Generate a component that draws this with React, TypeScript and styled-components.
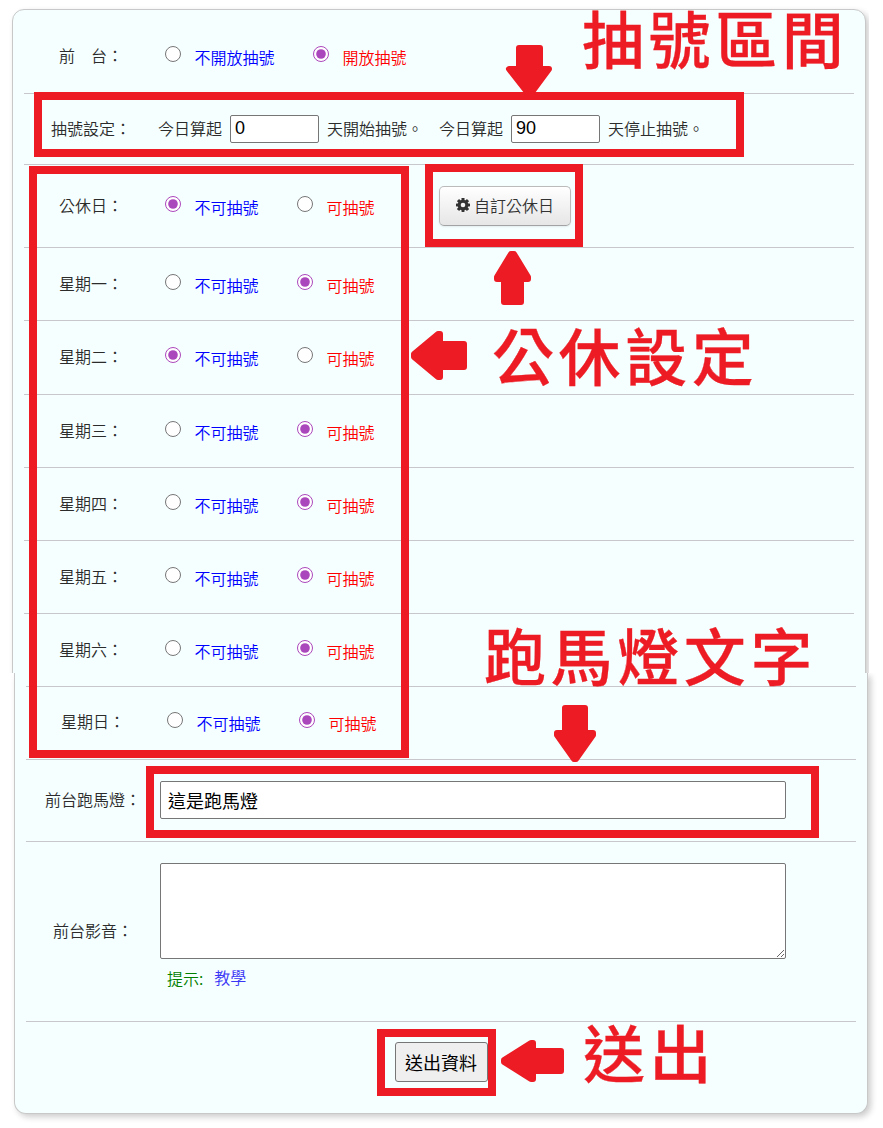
import React from 'react';
import styled, { createGlobalStyle } from 'styled-components';

const RED = '#ed1c24';
const CJK = '"Noto Sans CJK TC", sans-serif';

const GlobalStyle = createGlobalStyle`
  * { box-sizing: border-box; }
  body { margin: 0; background: #fff; }
`;

const Page = styled.div`
  position: relative;
  width: 883px;
  height: 1128px;
  overflow: hidden;
  font: 350 16px/20px ${CJK};
  color: #2b2b2b;
`;

const UpperHalf = styled.div`
  width: 869px;
  height: 673px;
  padding: 9px 0 0 12px;
  overflow: hidden;
`;

const LowerHalf = styled.div`
  height: 455px;
  padding-left: 14px;
  overflow: hidden;
`;

const Panel = styled.section<{ $end: 'top' | 'bottom' }>`
  width: 854px;
  height: ${p => (p.$end === 'top' ? 700 : 441)}px;
  padding: 0 11px;
  background: #f5ffff;
  border: 1px solid #c8c8c8;
  ${p => (p.$end === 'top' ? 'border-radius: 12px 12px 0 0;' : 'border-top: 0; border-radius: 0 0 12px 12px;')}
  box-shadow: 3px 3px 6px rgba(0, 0, 0, 0.2);
`;

const Row = styled.div<{ $h: number; $drop?: number; $lift?: number }>`
  display: flex;
  align-items: center;
  height: ${p => p.$h}px;
  padding-top: ${p => p.$drop ?? 0}px;
  padding-bottom: ${p => p.$lift ?? 0}px;
  border-bottom: 1px solid #c8c8cc;
`;

const RowLabel = styled.div`
  flex: none;
  width: 134px;
  padding-bottom: 2px;
  text-align: center;
  white-space: pre;
`;

const RadioGroup = styled.div`
  display: flex;
  gap: 38.5px;
  padding-left: 7px;
`;

const Choice = styled.label<{ $color: string }>`
  display: flex;
  align-items: center;
  gap: 13.5px;
  color: ${p => p.$color};
  span { padding-top: 2px; }
`;

const Radio = styled.input`
  width: 16px;
  height: 16px;
  margin: 0 0 5px;
  accent-color: #ab47bc;
`;

const Days = styled.div`
  display: flex;
  align-items: center;
`;

const DayInput = styled.input`
  width: 89px;
  height: 28px;
  margin: 0 8px;
  padding: 0 4px 2px;
  border: 1px solid #767676;
  border-radius: 2px;
  background: #fff;
  color: #000;
  font: 18px "Liberation Sans", sans-serif;
`;

const Phrase = styled.span<{ $after?: number }>`
  padding-bottom: 2px;
  margin-right: ${p => p.$after ?? 0}px;
`;

const HolidayButton = styled.button`
  display: flex;
  align-items: center;
  justify-content: center;
  gap: 4px;
  width: 132px;
  height: 40px;
  margin-left: 64.5px;
  padding: 0 0 2px;
  border: 1px solid #bbb;
  border-bottom-color: #a2a2a2;
  border-radius: 5px;
  background: linear-gradient(#fff, #e6e6e6);
  box-shadow: 0 1px 2px rgba(0, 0, 0, 0.08);
  color: #333;
  font: 350 16px/20px ${CJK};
`;

const TextField = styled.input`
  width: 626px;
  height: 38px;
  padding: 0 7px;
  border: 1px solid #767676;
  border-radius: 2px;
  background: #fff;
  color: #000;
  font: 400 18px ${CJK};
`;

const MediaCell = styled.div`
  align-self: flex-start;
  padding-top: 21px;
`;

const MediaArea = styled.textarea`
  display: block;
  width: 626px;
  height: 96px;
  border: 1px solid #767676;
  border-radius: 2px;
  background: #fff;
`;

const Hint = styled.p`
  display: flex;
  gap: 11px;
  margin: 9px 0 0 7px;
  color: #008000;
`;

const HintLink = styled.a`
  margin-top: -1px;
  color: #3a36f5;
`;

const SubmitRow = styled.div`
  padding: 20px 0 0 369px;
`;

const SubmitButton = styled.button`
  width: 93px;
  height: 40px;
  padding: 0 1px 0 0;
  border: 1px solid #767676;
  border-radius: 3px;
  background: #efefef;
  color: #000;
  font: 400 18px ${CJK};
`;

const Frame = styled.div<{ $x: number; $y: number; $w: number; $h: number }>`
  position: absolute;
  left: ${p => p.$x}px;
  top: ${p => p.$y}px;
  width: ${p => p.$w}px;
  height: ${p => p.$h}px;
  border: 8px solid ${RED};
  pointer-events: none;
`;

const Callout = styled.div<{ $x: number; $y: number }>`
  position: absolute;
  left: ${p => p.$x}px;
  top: ${p => p.$y}px;
  color: ${RED};
  font: 500 62px/70px ${CJK};
  letter-spacing: 4.6px;
  -webkit-text-stroke: 0.3px ${RED};
  white-space: nowrap;
`;

const Arrows = styled.svg`
  position: absolute;
  inset: 0;
  pointer-events: none;
`;

const Gear = () => (
  <svg width="14" height="14" viewBox="-7 -7 14 14" fill="#333">
    {[0, 45, 90, 135].map(a => (
      <rect key={a} x="-1.5" y="-7" width="3" height="14" rx="0.4" transform={`rotate(${a})`} />
    ))}
    <circle r="5.3" />
    <circle r="2.3" fill="#f4f4f4" />
  </svg>
);

type ChoicesProps = { name: string; off: string; on: string; open: boolean };

const Choices = ({ name, off, on, open }: ChoicesProps) => (
  <RadioGroup>
    <Choice $color="#0000ff">
      <Radio type="radio" name={name} defaultChecked={!open} />
      <span>{off}</span>
    </Choice>
    <Choice $color="#ff0000">
      <Radio type="radio" name={name} defaultChecked={open} />
      <span>{on}</span>
    </Choice>
  </RadioGroup>
);

type DayRowProps = { label: string; open: boolean; h?: number; lift?: number };

const DayRow = ({ label, open, h = 73, lift }: DayRowProps) => (
  <Row $h={h} $lift={lift}>
    <RowLabel>{label}：</RowLabel>
    <Choices name={label} off="不可抽號" on="可抽號" open={open} />
  </Row>
);

export default function App() {
  return (
    <Page>
      <GlobalStyle />
      <UpperHalf>
        <Panel $end="top">
          <Row $h={84} $drop={9}>
            <RowLabel>前　台：</RowLabel>
            <Choices name="front" off="不開放抽號" on="開放抽號" open />
          </Row>
          <Row $h={71}>
            <RowLabel>抽號設定：</RowLabel>
            <Days>
              <Phrase>今日算起</Phrase>
              <DayInput defaultValue="0" />
              <Phrase $after={16}>天開始抽號。</Phrase>
              <Phrase>今日算起</Phrase>
              <DayInput defaultValue="90" />
              <Phrase>天停止抽號。</Phrase>
            </Days>
          </Row>
          <Row $h={83}>
            <RowLabel>公休日：</RowLabel>
            <Choices name="holiday" off="不可抽號" on="可抽號" open={false} />
            <HolidayButton type="button">
              <Gear />
              自訂公休日
            </HolidayButton>
          </Row>
          <DayRow label="星期一" open />
          <DayRow label="星期二" open={false} h={74} lift={1} />
          <DayRow label="星期三" open />
          <DayRow label="星期四" open />
          <DayRow label="星期五" open />
          <DayRow label="星期六" open />
        </Panel>
      </UpperHalf>
      <LowerHalf>
        <Panel $end="bottom">
          <Row $h={14} />
          <DayRow label="星期日" open lift={2} />
          <Row $h={82} $lift={2}>
            <RowLabel>前台跑馬燈：</RowLabel>
            <TextField defaultValue="這是跑馬燈" />
          </Row>
          <Row $h={180} $lift={2}>
            <RowLabel>前台影音：</RowLabel>
            <MediaCell>
              <MediaArea />
              <Hint>
                <span>提示:</span>
                <HintLink>教學</HintLink>
              </Hint>
            </MediaCell>
          </Row>
          <SubmitRow>
            <SubmitButton type="button">送出資料</SubmitButton>
          </SubmitRow>
        </Panel>
      </LowerHalf>

      <Frame $x={34} $y={92} $w={710} $h={65} />
      <Frame $x={29} $y={166} $w={380} $h={592} />
      <Frame $x={425} $y={164} $w={158} $h={83} />
      <Frame $x={146} $y={766} $w={673} $h={72} />
      <Frame $x={377} $y={1029} $w={119} $h={67} />

      <Callout $x={582} $y={2}>抽號區間</Callout>
      <Callout $x={492} $y={319}>公休設定</Callout>
      <Callout $x={484} $y={619}>跑馬燈文字</Callout>
      <Callout $x={583} $y={1016}>送出</Callout>

      <Arrows width="883" height="1128" fill={RED} stroke={RED} strokeWidth="6" strokeLinejoin="round">
        <path d="M519 48H540V69H549L532 92H527L509 69H519Z" />
        <path d="M511 254H514L528 277V279H521V302H504V279H497V277Z" />
        <path d="M414 354V357L438 377H440V367H464V344H440V334H438Z" />
        <path d="M565 708H585V733H593V735L576 759H574L557 735V733H565Z" />
        <path d="M504 1060V1062L531 1079H533V1071H561V1051H533V1043H531Z" />
      </Arrows>
    </Page>
  );
}
